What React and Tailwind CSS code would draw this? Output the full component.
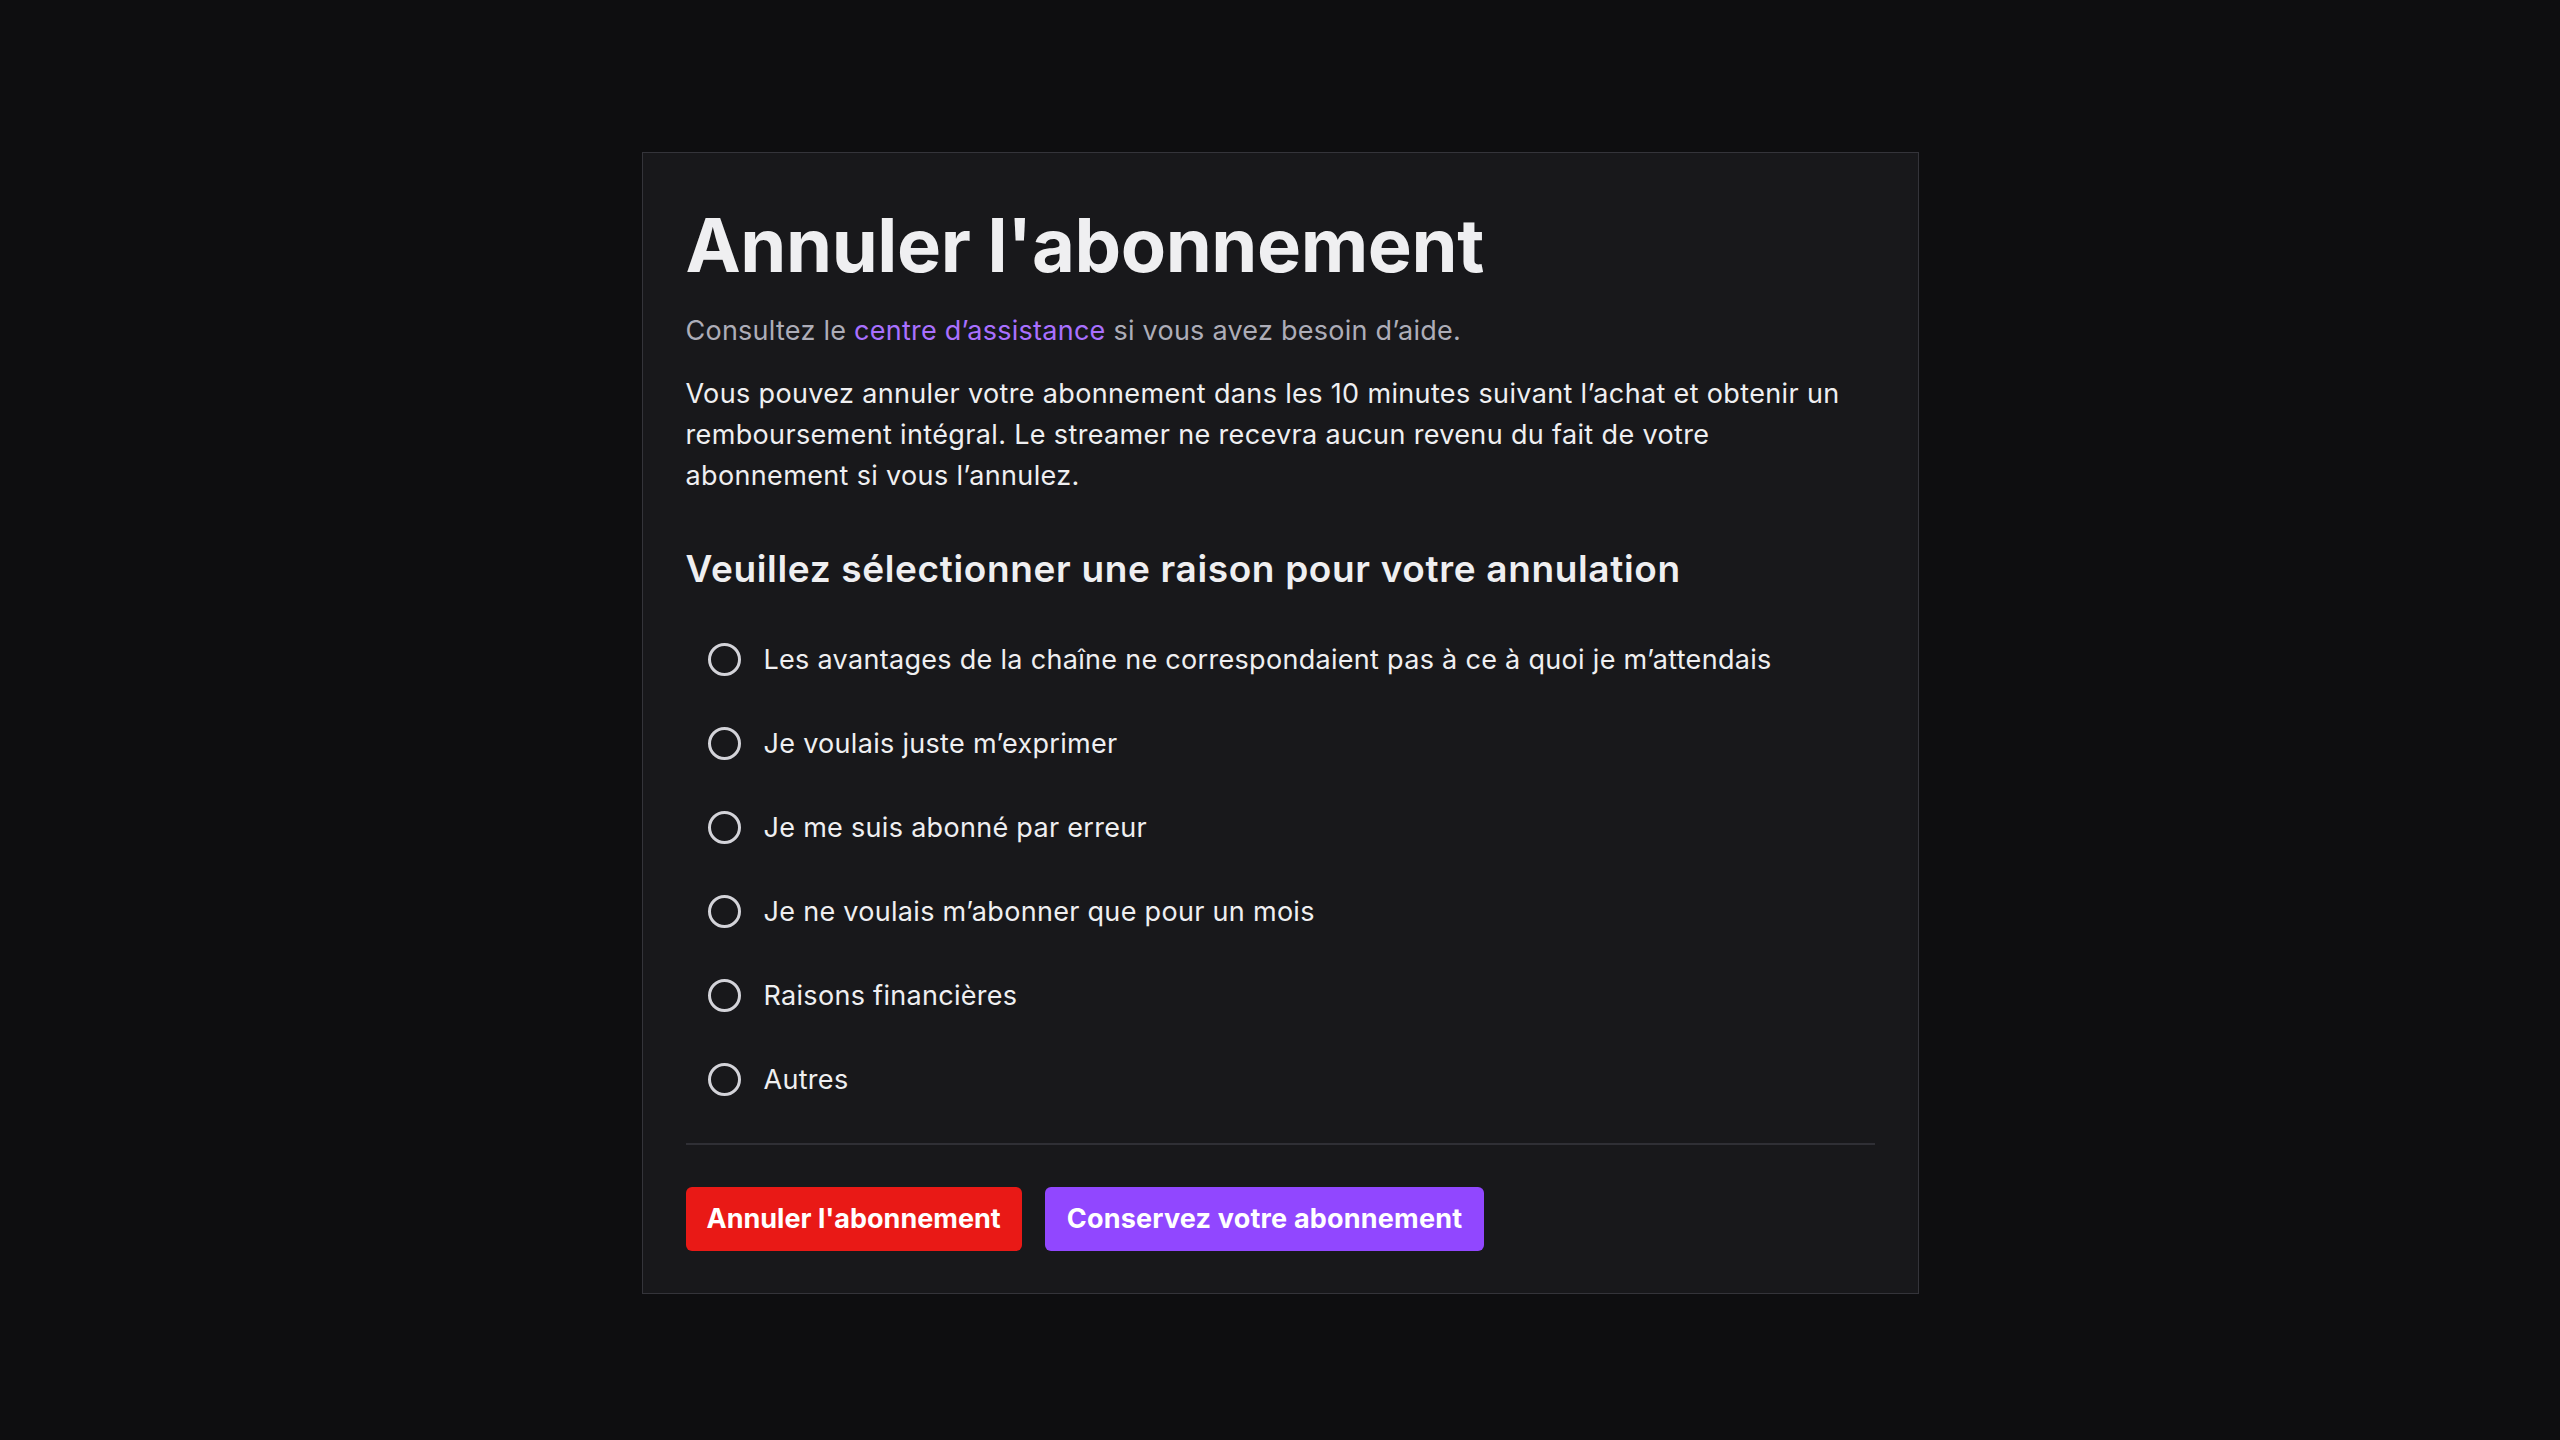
import React, { useState } from "react";

const reasons = [
	"Les avantages de la chaîne ne correspondaient pas à ce à quoi je m’attendais",
	"Je voulais juste m’exprimer",
	"Je me suis abonné par erreur",
	"Je ne voulais m’abonner que pour un mois",
	"Raisons financières",
	"Autres",
];

const App = () => {
	const [selected, setSelected] = useState(null);

	return (
		<div
			className="min-h-screen w-full bg-[#0e0e10] flex justify-center pt-[152px]"
			style={{ fontFamily: "Inter, 'Noto Sans', sans-serif" }}
		>
			<div className="w-[1277px] h-[1142px] bg-[#18181b] border border-[#34343a] px-[43px] pt-[44px]">
				<h1 className="text-[74px] leading-[96px] font-bold text-[#efeff1] tracking-[-0.4px]">
					Annuler l'abonnement
				</h1>
				<p className="mt-[17px] text-[27px] leading-[41px] text-[#adadb8] tracking-[0.25px]">
					Consultez le{" "}
					<a href="#" className="text-[#a970ff]">
						centre d’assistance
					</a>{" "}
					si vous avez besoin d’aide.
				</p>
				<p className="mt-[22px] text-[27px] leading-[41px] text-[#efeff1] tracking-[0.35px] max-w-[1165px]">
					Vous pouvez annuler votre abonnement dans les 10 minutes suivant l’achat et obtenir un
					remboursement intégral. Le streamer ne recevra aucun revenu du fait de votre{" "}
					<br />
					abonnement si vous l’annulez.
				</p>
				<h2 className="mt-[51px] text-[37px] leading-[44px] font-semibold text-[#efeff1] tracking-[0.65px]">
					Veuillez sélectionner une raison pour votre annulation
				</h2>
				<div className="mt-[26px] flex flex-col">
					{reasons.map((r, i) => (
						<label
							key={i}
							className="h-[84px] flex items-center gap-[23px] pl-[22px] cursor-pointer"
							onClick={() => setSelected(i)}
						>
							<span className="w-[33px] h-[33px] rounded-full border-[3px] border-[#d3d3d9] flex items-center justify-center shrink-0">
								{selected === i && (
									<span className="w-[15px] h-[15px] rounded-full bg-[#a970ff]" />
								)}
							</span>
							<span className="text-[27px] leading-[41px] text-[#efeff1] tracking-[0.3px]">{r}</span>
						</label>
					))}
				</div>
				<div className="mt-[22px] h-[2px] bg-[#2f2f35]" />
				<div className="mt-[42px] flex gap-[23px]">
					<button className="h-[64px] px-[21px] rounded-[6px] bg-[#e91916] text-white text-[27px] font-bold">
						Annuler l'abonnement
					</button>
					<button className="h-[64px] px-[22px] rounded-[6px] bg-[#9147ff] text-white text-[27px] font-bold tracking-[0.2px]">
						Conservez votre abonnement
					</button>
				</div>
			</div>
		</div>
	);
};

export default App;
